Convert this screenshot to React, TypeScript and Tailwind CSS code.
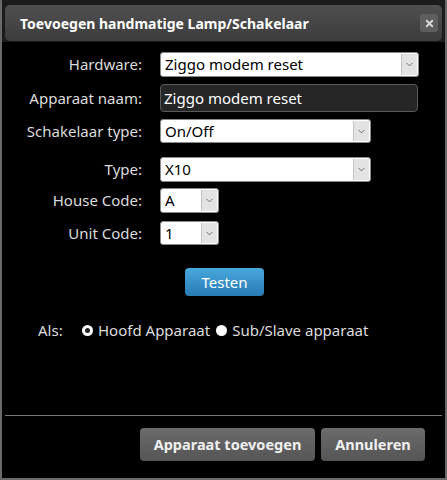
import { ChevronDown, X } from 'lucide-react';

// ── Select box ────────────────────────────────────────────────────────

function FakeSelect({ value, className }: { value: string; className: string }) {
  return (
    <div
      className={`flex items-stretch bg-white rounded-[3px] border border-[#8a8a8a] p-px ${className}`}
    >
      <span className="flex-1 flex items-center pl-[3px] text-[15px] text-black leading-none whitespace-nowrap overflow-hidden">
        {value}
      </span>
      <span className="w-[16px] flex items-center justify-center bg-[#e3e3e3] border-l border-[#c4c4c4]">
        <ChevronDown className="w-[11px] h-[11px] text-[#3a3a3a]" strokeWidth={1.5} />
      </span>
    </div>
  );
}

function Row({ label, children, className = '' }: { label: string; children: React.ReactNode; className?: string }) {
  return (
    <div className={`flex items-center ${className}`}>
      <span className="w-[141px] text-right text-[15px] text-[#dcdcdc] leading-none pr-px">{label}</span>
      <div className="ml-[17px]">{children}</div>
    </div>
  );
}

function Radio({ checked }: { checked: boolean }) {
  return (
    <span className="w-[11px] h-[11px] rounded-full bg-white flex items-center justify-center">
      {checked && <span className="w-[5px] h-[5px] rounded-full bg-[#222]" />}
    </span>
  );
}

// ── Dialog ────────────────────────────────────────────────────────────

export default function App() {
  return (
    <div
      className="w-[447px] h-[480px] bg-[#1c1c1c] border-x-2 border-b-2 border-[#6a6a6a] flex flex-col overflow-hidden"
      style={{ fontFamily: '"Noto Sans", "Open Sans", sans-serif' }}
    >
      <div className="bg-[#1c1c1c] pt-[5px] px-[3px] pb-px">
        {/* Title bar */}
        <div className="h-[36px] rounded-[5px] bg-gradient-to-b from-[#505050] to-[#3c3c3c] flex items-center justify-between pl-[15px] pr-[4px]">
          <span className="text-white font-bold text-[14px]">
            Toevoegen handmatige Lamp/Schakelaar
          </span>
          <span className="w-[18px] h-[18px] rounded-[3px] bg-[#5e5e5e] flex items-center justify-center">
            <X className="w-[11px] h-[11px] text-[#dcdcdc]" strokeWidth={4} />
          </span>
        </div>
      </div>

      {/* Body */}
      <div className="flex-1 bg-black flex flex-col">
        <div className="pt-[10px] flex flex-col">
          <Row label="Hardware:">
            <FakeSelect value="Ziggo modem reset" className="w-[259px] h-[25px]" />
          </Row>
          <Row label="Apparaat naam:" className="mt-[7px]">
            <div className="w-[258px] h-[28px] rounded-[4px] bg-[#262626] border border-[#5a5a5a] flex items-center pl-[3px] text-[15px] text-white leading-none">
              Ziggo modem reset
            </div>
          </Row>
          <Row label="Schakelaar type:" className="mt-[7px]">
            <FakeSelect value="On/Off" className="w-[211px] h-[24px]" />
          </Row>
          <Row label="Type:" className="mt-[14px]">
            <FakeSelect value="X10" className="w-[211px] h-[25px]" />
          </Row>
          <Row label="House Code:" className="mt-[6px]">
            <FakeSelect value="A" className="w-[59px] h-[25px]" />
          </Row>
          <Row label="Unit Code:" className="mt-[8px]">
            <FakeSelect value="1" className="w-[59px] h-[24px]" />
          </Row>
        </div>

        <div className="mt-[23px] pl-[183px]">
          <button className="w-[79px] h-[28px] rounded-[4px] bg-gradient-to-b from-[#48a8dc] to-[#2a7bb5] text-white text-[15px] leading-none">
            Testen
          </button>
        </div>

        <div className="mt-[27px] flex items-center pl-[36px] text-[15px] text-[#dcdcdc] leading-none">
          <span className="w-[44px]">Als:</span>
          <Radio checked />
          <span className="ml-[5px]">Hoofd Apparaat</span>
          <span className="ml-[6px]">
            <Radio checked={false} />
          </span>
          <span className="ml-[5px]">Sub/Slave apparaat</span>
        </div>

        <div className="flex-1" />

        <div className="mx-[3px] h-px bg-[#777]" />

        <div className="h-[62px] flex items-start justify-end gap-[6px] pt-[12px] pr-[20px]">
          <button className="h-[33px] w-[175px] rounded-[4px] bg-gradient-to-b from-[#6c6c6c] to-[#555] text-[#f0f0f0] font-bold text-[14.5px]">
            Apparaat toevoegen
          </button>
          <button className="h-[33px] w-[104px] rounded-[4px] bg-gradient-to-b from-[#6c6c6c] to-[#555] text-[#f0f0f0] font-bold text-[14.5px]">
            Annuleren
          </button>
        </div>
      </div>
    </div>
  );
}
